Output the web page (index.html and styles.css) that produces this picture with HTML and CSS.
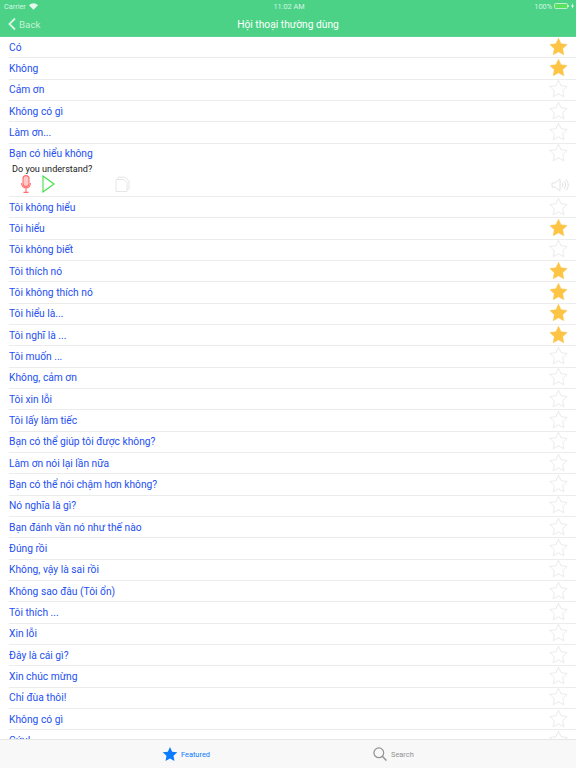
FILE: index.html
```html
<!DOCTYPE html>
<html lang="vi">
<head>
<meta charset="utf-8">
<title>Hội thoại thường dùng</title>
<link rel="stylesheet" href="styles.css">
</head>
<body>
<svg class="defs" width="0" height="0" aria-hidden="true">
  <defs>
    <symbol id="star" viewBox="0 0 20 20">
      <path d="M10 1.200l2.700 5.900 6.400.8-4.700 4.400 1.200 6.400L10 15.600l-5.600 3.100 1.200-6.400L.9 7.900l6.400-.8z"/>
    </symbol>
  </defs>
</svg>
<div class="app">
  <header class="top">
    <div class="status">
      <span class="carrier">Carrier
        <svg class="wifi" width="9" height="7" viewBox="0 0 9 7"><path d="M4.500 6.800L0 2.200C2.600-.5 6.400-.5 9 2.200z"/></svg>
      </span>
      <span class="time">11:02 AM</span>
      <span class="battery-wrap">100%
        <span class="battery"><span class="battery-fill"></span></span>
        <span class="battery-tip"></span>
        <svg class="bolt" width="3" height="6" viewBox="0 0 3 6"><path d="M2 0L0 3.400h1.100L.9 6 3 2.500H1.800z"/></svg>
      </span>
    </div>
    <nav class="nav">
      <a class="back">
        <svg width="8" height="14" viewBox="0 0 8 14"><path d="M7 1.500L1.500 7 7 12.500" fill="none" stroke="currentColor" stroke-width="1.900"/></svg>
        <span class="back-label">Back</span>
      </a>
      <h1 class="title">Hội thoại thường dùng</h1>
    </nav>
  </header>

  <main class="list">
    <div class="row"><span class="phrase">Có</span><svg class="star star-on" viewBox="0 0 20 20"><use href="#star"/></svg></div>
    <div class="row"><span class="phrase">Không</span><svg class="star star-on" viewBox="0 0 20 20"><use href="#star"/></svg></div>
    <div class="row"><span class="phrase">Cảm ơn</span><svg class="star star-off" viewBox="0 0 20 20"><use href="#star"/></svg></div>
    <div class="row"><span class="phrase">Không có gì</span><svg class="star star-off" viewBox="0 0 20 20"><use href="#star"/></svg></div>
    <div class="row"><span class="phrase">Làm ơn...</span><svg class="star star-off" viewBox="0 0 20 20"><use href="#star"/></svg></div>
    <div class="row row-open">
      <div class="row-head"><span class="phrase">Bạn có hiểu không</span><svg class="star star-off" viewBox="0 0 20 20"><use href="#star"/></svg></div>
      <p class="english">Do you understand?</p>
      <div class="tools">
        <svg class="tool-mic" width="10" height="18" viewBox="0 0 10 18" fill="none" stroke="#ff6b6b" stroke-width="1.100"><rect x="2" y=".6" width="6" height="11" rx="3" fill="#ffc9c9"/><path d="M.6 8c0 6.500 8.800 6.500 8.800 0M5 13v4M2.500 17.400h5"/></svg>
        <svg class="tool-play" width="13" height="18" viewBox="0 0 13 18" fill="none" stroke="#3fe03f" stroke-width="1.100"><path d="M1 1l11 8-11 8z"/></svg>
        <svg class="tool-copy" width="15" height="16" viewBox="0 0 15 16" fill="none" stroke="#e6e6e6" stroke-width="1"><path d="M3 3V1.200h7l4 4V13h-2M1 3.500h8l3 3V15.500H1z"/></svg>
        <svg class="tool-sound" width="18" height="14" viewBox="0 0 18 14" fill="none" stroke="#e2e2e2" stroke-width="1"><path d="M1 5h3l5-4v12L4 9H1zM11 4.500c1 1.500 1 3.500 0 5M13 3c2 2.500 2 5.500 0 8M15 1.500c3 3.500 3 7.500 0 11"/></svg>
      </div>
    </div>
    <div class="row"><span class="phrase">Tôi không hiểu</span><svg class="star star-off" viewBox="0 0 20 20"><use href="#star"/></svg></div>
    <div class="row"><span class="phrase">Tôi hiểu</span><svg class="star star-on" viewBox="0 0 20 20"><use href="#star"/></svg></div>
    <div class="row"><span class="phrase">Tôi không biết</span><svg class="star star-off" viewBox="0 0 20 20"><use href="#star"/></svg></div>
    <div class="row"><span class="phrase">Tôi thích nó</span><svg class="star star-on" viewBox="0 0 20 20"><use href="#star"/></svg></div>
    <div class="row"><span class="phrase">Tôi không thích nó</span><svg class="star star-on" viewBox="0 0 20 20"><use href="#star"/></svg></div>
    <div class="row"><span class="phrase">Tôi hiểu là...</span><svg class="star star-on" viewBox="0 0 20 20"><use href="#star"/></svg></div>
    <div class="row"><span class="phrase">Tôi nghĩ là ...</span><svg class="star star-on" viewBox="0 0 20 20"><use href="#star"/></svg></div>
    <div class="row"><span class="phrase">Tôi muốn ...</span><svg class="star star-off" viewBox="0 0 20 20"><use href="#star"/></svg></div>
    <div class="row"><span class="phrase">Không, cảm ơn</span><svg class="star star-off" viewBox="0 0 20 20"><use href="#star"/></svg></div>
    <div class="row"><span class="phrase">Tôi xin lỗi</span><svg class="star star-off" viewBox="0 0 20 20"><use href="#star"/></svg></div>
    <div class="row"><span class="phrase">Tôi lấy làm tiếc</span><svg class="star star-off" viewBox="0 0 20 20"><use href="#star"/></svg></div>
    <div class="row"><span class="phrase">Bạn có thể giúp tôi được không?</span><svg class="star star-off" viewBox="0 0 20 20"><use href="#star"/></svg></div>
    <div class="row"><span class="phrase">Làm ơn nói lại lần nữa</span><svg class="star star-off" viewBox="0 0 20 20"><use href="#star"/></svg></div>
    <div class="row"><span class="phrase">Bạn có thể nói chậm hơn không?</span><svg class="star star-off" viewBox="0 0 20 20"><use href="#star"/></svg></div>
    <div class="row"><span class="phrase">Nó nghĩa là gì?</span><svg class="star star-off" viewBox="0 0 20 20"><use href="#star"/></svg></div>
    <div class="row"><span class="phrase">Bạn đánh vần nó như thế nào</span><svg class="star star-off" viewBox="0 0 20 20"><use href="#star"/></svg></div>
    <div class="row"><span class="phrase">Đúng rồi</span><svg class="star star-off" viewBox="0 0 20 20"><use href="#star"/></svg></div>
    <div class="row"><span class="phrase">Không, vậy là sai rồi</span><svg class="star star-off" viewBox="0 0 20 20"><use href="#star"/></svg></div>
    <div class="row"><span class="phrase">Không sao đâu (Tôi ổn)</span><svg class="star star-off" viewBox="0 0 20 20"><use href="#star"/></svg></div>
    <div class="row"><span class="phrase">Tôi thích ...</span><svg class="star star-off" viewBox="0 0 20 20"><use href="#star"/></svg></div>
    <div class="row"><span class="phrase">Xin lỗi</span><svg class="star star-off" viewBox="0 0 20 20"><use href="#star"/></svg></div>
    <div class="row"><span class="phrase">Đây là cái gì?</span><svg class="star star-off" viewBox="0 0 20 20"><use href="#star"/></svg></div>
    <div class="row"><span class="phrase">Xin chúc mừng</span><svg class="star star-off" viewBox="0 0 20 20"><use href="#star"/></svg></div>
    <div class="row"><span class="phrase">Chỉ đùa thôi!</span><svg class="star star-off" viewBox="0 0 20 20"><use href="#star"/></svg></div>
    <div class="row"><span class="phrase">Không có gì</span><svg class="star star-off" viewBox="0 0 20 20"><use href="#star"/></svg></div>
    <div class="row"><span class="phrase">Cứu!</span><svg class="star star-off" viewBox="0 0 20 20"><use href="#star"/></svg></div>
  </main>

  <footer class="tabs">
    <div class="tab tab-on">
      <svg width="16" height="16" viewBox="0 0 20 20"><use href="#star"/></svg>
      <span>Featured</span>
    </div>
    <div class="tab tab-off">
      <svg width="14" height="14" viewBox="0 0 14 14"><circle cx="5.800" cy="5.800" r="4.900" fill="none" stroke="currentColor" stroke-width="1.200"/><path d="M9.300 9.300L13.400 13.600" stroke="currentColor" stroke-width="1.400"/></svg>
      <span>Search</span>
    </div>
  </footer>
</div>
</body>
</html>
```
FILE: styles.css
```css
* { box-sizing: border-box; }
html, body { margin: 0; padding: 0; }
body { width: 576px; height: 768px; overflow: hidden; background: #fff; font-family: Roboto, "Liberation Sans", sans-serif; }
.defs { position: absolute; }
.app { display: flex; flex-direction: column; height: 768px; }

.top { flex: none; height: 37px; background: #4cd286; color: #fff; border-bottom: 1px solid #5fd192; }
.status { height: 12px; padding: 0 2px 0 4px; display: flex; justify-content: space-between; align-items: center; font-size: 7.300px; color: #d6f5e3; position: relative; }
.carrier { display: flex; align-items: center; gap: 3px; }
.wifi { fill: #e8faef; }
.time { position: absolute; left: 0; right: 0; text-align: center; padding-left: 2px; }
.battery-wrap { display: flex; align-items: center; gap: 2px; }
.battery { width: 14px; height: 6px; border: 1px solid #bdf0d0; border-radius: 1.5px; display: block; }
.battery-fill { display: block; height: 100%; background: #58e25e; }
.battery-tip { width: 1px; height: 2px; background: #bdf0d0; margin-left: -2px; }
.bolt { fill: #e8faef; }

.nav { height: 24px; position: relative; display: flex; align-items: center; justify-content: center; }
.back { position: absolute; left: 8px; top: 5px; display: flex; align-items: center; gap: 3px; font-size: 9.800px; color: #d4f5e1; }
.back-label { color: #c6f1d8; }
.title { margin: 0; font-size: 10.250px; font-weight: 400; color: #fff; }

.list { flex: 1; min-height: 0; overflow: hidden; }
.row { height: 21.34px; margin-left: 9px; border-bottom: 1px solid #ececec; display: flex; align-items: center; justify-content: space-between; padding-right: 8px; }
.row-open { height: 53.34px; display: block; position: relative; }
.row-head { height: 20px; display: flex; align-items: center; justify-content: space-between; }
.phrase { font-size: 10.250px; color: #2450f0; white-space: nowrap; }
.star { width: 19px; height: 19px; display: block; margin-top: -2px; }
.star-on { fill: #fdc543; stroke: #f5b93a; stroke-width: .4; }
.star-off { fill: #fff; stroke: #e3e3e3; stroke-width: .8; }
.english { margin: 0 0 0 3px; font-size: 9.100px; line-height: 10px; color: #222; }
.tools { display: flex; align-items: center; margin-top: 1px; height: 18px; }
.tool-mic { margin-left: 12px; }
.tool-play { margin-left: 11px; }
.tool-copy { margin-left: 60px; }
.tool-sound { position: absolute; right: 7px; top: 34px; }

.tabs { flex: none; height: 29px; background: #f8f8f8; border-top: 1px solid #e6e6e6; display: grid; grid-template-columns: 1fr 1fr; font-size: 7.400px; position: relative; z-index: 1; }
.tab { display: flex; align-items: center; gap: 3px; }
.tab-on { color: #0a7afe; fill: #0a7afe; padding-left: 162px; }
.tab-off { color: #929292; padding-left: 85px; gap: 4px; }
```
